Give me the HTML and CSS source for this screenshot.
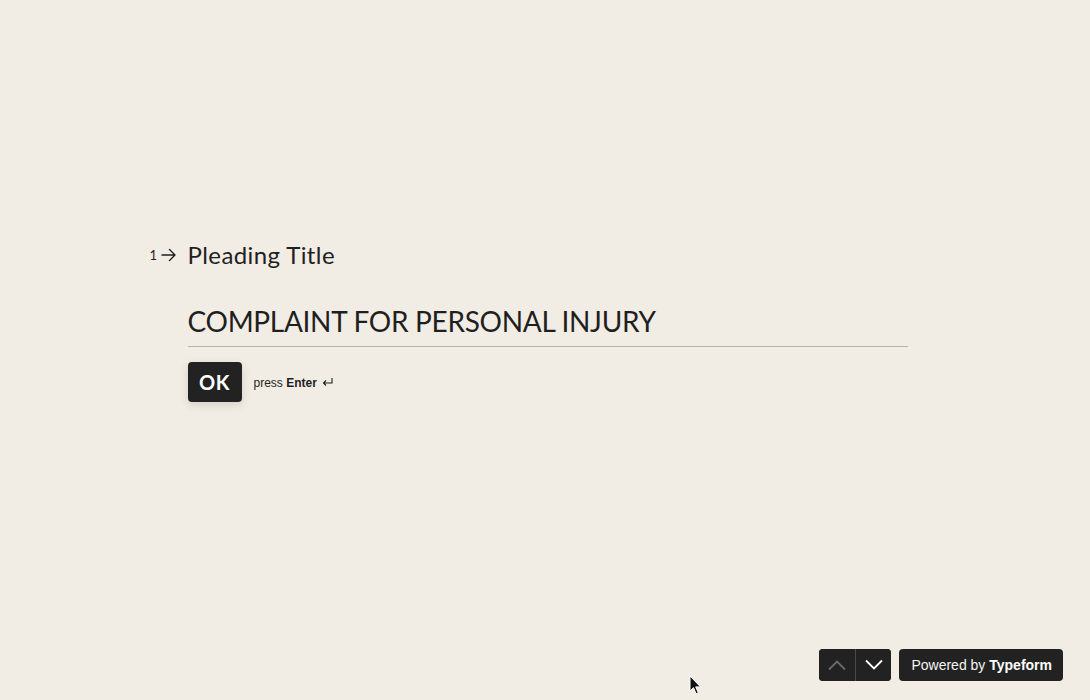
FILE: index.html
```html
<!DOCTYPE html>
<html lang="en">
<head>
<meta charset="utf-8">
<title>Pleading Title</title>
<link rel="stylesheet" href="styles.css">
</head>
<body>
<div class="page">
  <main class="stage">
    <section class="block">
      <div class="question">
        <span class="counter"><span class="num">1</span><svg class="arrow" width="16" height="14" viewBox="0 0 16 14"><path d="M1 7h13M8.5 1.5L14 7l-5.5 5.5" fill="none" stroke="#1f1f1f" stroke-width="1.4" stroke-linecap="round" stroke-linejoin="round"/></svg></span>
        <h1 class="title">Pleading Title</h1>
      </div>
      <div class="answer">COMPLAINT FOR PERSONAL INJURY</div>
      <div class="actions">
        <button class="ok">OK</button>
        <span class="hint">press <b>Enter</b> <svg class="enter" width="11" height="10" viewBox="0 0 11 10"><path d="M10 1v5H1.5M4 3.5L1.5 6 4 8.5" fill="none" stroke="#1f1f1f" stroke-width="1.1"/></svg></span>
      </div>
    </section>
  </main>
  <footer class="footer">
    <div class="nav">
      <button class="nav-btn disabled"><svg width="20" height="12" viewBox="0 0 20 12"><path d="M2 10.5L10 2.5l8 8" fill="none" stroke="#6a6a6a" stroke-width="1.8"/></svg></button>
      <button class="nav-btn"><svg width="20" height="12" viewBox="0 0 20 12"><path d="M2 1.5l8 8 8-8" fill="none" stroke="#ffffff" stroke-width="1.8"/></svg></button>
    </div>
    <a class="powered">Powered by <b>Typeform</b></a>
  </footer>
  <svg class="cursor" width="14" height="20" viewBox="0 0 14 20"><path d="M1 1v15l3.5-3.3 2.6 6 2.2-1-2.6-5.8H11.5z" fill="#111" stroke="#fff" stroke-width="1"/></svg>
</div>
</body>
</html>
```

FILE: styles.css
```css
html, body {
  margin: 0;
  padding: 0;
  background: #f1ece4;
}
.page {
  position: relative;
  height: 700px;
  display: flex;
  flex-direction: column;
  font-family: "Lato", "Liberation Sans", sans-serif;
  color: #1f1f1f;
}
.stage {
  flex: 1;
  display: flex;
  justify-content: center;
  padding-top: 237px;
}
.block {
  width: 720px;
  margin-left: 5px;
}
.question {
  display: flex;
  align-items: center;
  margin-left: -38px;
}
.counter {
  width: 38px;
  display: flex;
  align-items: center;
  gap: 4px;
}
.num {
  font-size: 13px;
  line-height: 1;
}
.arrow {
  display: block;
}
.title {
  margin: 0;
  font-size: 24px;
  font-weight: 400;
  line-height: 36px;
  letter-spacing: 0.4px;
}
.answer {
  margin-top: 30px;
  font-size: 28px;
  line-height: 36px;
  letter-spacing: -0.3px;
  padding-bottom: 7px;
  border-bottom: 1px solid #b8b3ad;
}
.actions {
  display: flex;
  align-items: center;
  margin-top: 15px;
  gap: 12px;
}
.ok {
  width: 54px;
  height: 40px;
  border: 0;
  border-radius: 4px;
  background: #222222;
  color: #ffffff;
  font-family: "Lato", "Liberation Sans", sans-serif;
  font-size: 20px;
  font-weight: 700;
  letter-spacing: 0.5px;
  box-shadow: 0 3px 10px rgba(0, 0, 0, 0.12);
  padding: 0;
}
.hint {
  font-family: "Liberation Sans", Arial, sans-serif;
  font-size: 12px;
  color: #1f1f1f;
  padding-top: 2px;
}
.hint b {
  font-weight: 700;
}
.enter {
  margin-left: 2px;
  vertical-align: 0;
}
.footer {
  display: flex;
  justify-content: flex-end;
  align-items: center;
  gap: 8px;
  padding: 0 27px 19px 0;
}
.nav {
  display: flex;
  height: 32px;
  background: #222222;
  border-radius: 4px;
  overflow: hidden;
}
.nav-btn {
  width: 36px;
  height: 32px;
  border: 0;
  padding: 0;
  background: #222222;
  display: flex;
  align-items: center;
  justify-content: center;
}
.nav-btn + .nav-btn {
  border-left: 1px solid #4a4a4a;
}
.powered {
  height: 32px;
  display: flex;
  align-items: center;
  padding: 0 11px 0 12px;
  background: #222222;
  border-radius: 4px;
  color: #f4f4f4;
  font-family: "Liberation Sans", Arial, sans-serif;
  font-size: 14px;
  white-space: pre;
}
.powered b {
  font-weight: 700;
  color: #ffffff;
}
.cursor {
  position: absolute;
  left: 689px;
  top: 675px;
}
```
